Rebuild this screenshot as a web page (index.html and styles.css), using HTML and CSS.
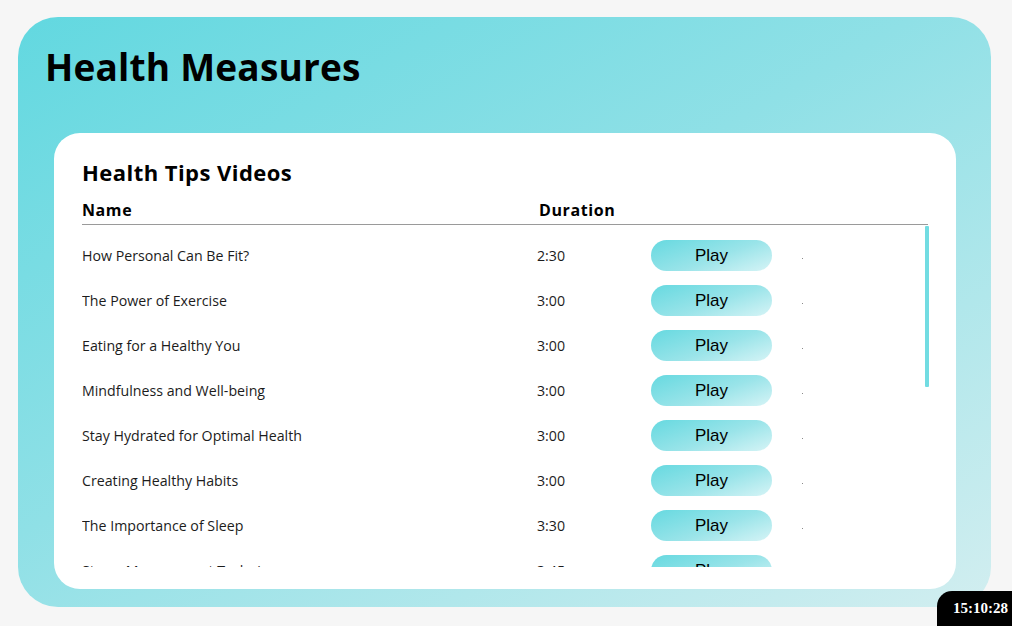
FILE: index.html
```html
<!DOCTYPE html>
<html lang="en">
<head>
<meta charset="utf-8">
<title>Health Measures</title>
<link rel="stylesheet" href="styles.css">
</head>
<body>
<main class="panel">
  <h1 class="title">Health Measures</h1>
  <section class="card">
    <h2 class="card-title">Health Tips Videos</h2>
    <div class="thead">
      <div class="th th-name">Name</div>
      <div class="th th-dur">Duration</div>
      <div class="th"></div>
      <div class="th"></div>
    </div>
    <div class="scroll-wrap">
      <div class="tbody">
        <div class="row"><div class="name">How Personal Can Be Fit?</div><div class="dur">2:30</div><div><button class="play">Play</button></div><div><span class="dot"></span></div></div>
        <div class="row"><div class="name">The Power of Exercise</div><div class="dur">3:00</div><div><button class="play">Play</button></div><div><span class="dot"></span></div></div>
        <div class="row"><div class="name">Eating for a Healthy You</div><div class="dur">3:00</div><div><button class="play">Play</button></div><div><span class="dot"></span></div></div>
        <div class="row"><div class="name">Mindfulness and Well-being</div><div class="dur">3:00</div><div><button class="play">Play</button></div><div><span class="dot"></span></div></div>
        <div class="row"><div class="name">Stay Hydrated for Optimal Health</div><div class="dur">3:00</div><div><button class="play">Play</button></div><div><span class="dot"></span></div></div>
        <div class="row"><div class="name">Creating Healthy Habits</div><div class="dur">3:00</div><div><button class="play">Play</button></div><div><span class="dot"></span></div></div>
        <div class="row"><div class="name">The Importance of Sleep</div><div class="dur">3:30</div><div><button class="play">Play</button></div><div><span class="dot"></span></div></div>
        <div class="row"><div class="name">Stress Management Techniques</div><div class="dur">3:45</div><div><button class="play">Play</button></div><div><span class="dot"></span></div></div>
        <div class="row"><div class="name">Building Strong Bones</div><div class="dur">3:00</div><div><button class="play">Play</button></div><div><span class="dot"></span></div></div>
        <div class="row"><div class="name">Heart Health Basics</div><div class="dur">3:15</div><div><button class="play">Play</button></div><div><span class="dot"></span></div></div>
        <div class="row"><div class="name">Stretching for Flexibility</div><div class="dur">2:45</div><div><button class="play">Play</button></div><div><span class="dot"></span></div></div>
        <div class="row"><div class="name">Healthy Snacking Ideas</div><div class="dur">3:00</div><div><button class="play">Play</button></div><div><span class="dot"></span></div></div>
        <div class="row"><div class="name">Posture and Back Care</div><div class="dur">3:20</div><div><button class="play">Play</button></div><div><span class="dot"></span></div></div>
        <div class="row"><div class="name">Boosting Your Immunity</div><div class="dur">3:10</div><div><button class="play">Play</button></div><div><span class="dot"></span></div></div>
        <div class="row"><div class="name">Walking Your Way to Health</div><div class="dur">2:50</div><div><button class="play">Play</button></div><div><span class="dot"></span></div></div>
        <div class="row"><div class="name">Screen Time and Eye Care</div><div class="dur">3:00</div><div><button class="play">Play</button></div><div><span class="dot"></span></div></div>
      </div>
      <div class="thumb"></div>
    </div>
  </section>
</main>
<div class="clock">15:10:28</div>
</body>
</html>
```
FILE: styles.css
```css
html, body {
  margin: 0;
  padding: 0;
}
body {
  background: #f6f6f6;
  width: 1012px;
  height: 626px;
  overflow: hidden;
  font-family: "Open Sans", "Liberation Sans", sans-serif;
}
.panel {
  box-sizing: border-box;
  margin: 17px 21px 0 18px;
  width: 973px;
  height: 590px;
  border-radius: 40px;
  background: linear-gradient(150deg, #62d8e0 0%, #8fe0e6 45%, #d2eef0 100%);
  padding: 28px 35px 18px 27px;
  display: flex;
  flex-direction: column;
}
.title {
  margin: 0;
  font-family: "Open Sans", sans-serif;
  font-weight: 700;
  font-size: 37px;
  line-height: 44px;
  color: #000;
  letter-spacing: 0.2px;
}
.card {
  margin: 44px 0 0 9px;
  background: #fff;
  border-radius: 26px;
  padding: 24px 26px 22px 28px;
  height: 456px;
  box-sizing: border-box;
  display: flex;
  flex-direction: column;
}
.card-title {
  margin: 0;
  font-family: "Open Sans", sans-serif;
  font-weight: 700;
  font-size: 22px;
  line-height: 30px;
  letter-spacing: 0.45px;
  color: #000;
}
.thead, .row {
  display: grid;
  grid-template-columns: 455px 114px 151px 1fr;
}
.thead {
  align-items: center;
  margin-top: 13px;
  padding-bottom: 4px;
  border-bottom: 1px solid #9a9a9a;
  margin-right: 2px;
}
.th {
  font-weight: 700;
  font-size: 16px;
  line-height: 20px;
  letter-spacing: 0.6px;
  color: #000;
}
.th-dur {
  padding-left: 2px;
}
.scroll-wrap {
  position: relative;
  margin-top: 1px;
  height: 341px;
}
.tbody {
  height: 100%;
  overflow-y: scroll;
  scrollbar-width: none;
  padding-top: 7px;
  box-sizing: border-box;
}
.tbody::-webkit-scrollbar {
  display: none;
}
.thumb {
  position: absolute;
  top: 0;
  right: 1px;
  width: 4px;
  height: 161px;
  background: #72dce2;
  border-radius: 1px;
}
.row {
  height: 45px;
  padding-top: 7px;
  box-sizing: border-box;
  align-items: start;
}
.name, .dur {
  font-size: 14.2px;
  line-height: 31px;
  color: #1c1c1c;
}
.play {
  display: block;
  width: 121px;
  height: 31px;
  border: none;
  border-radius: 16px;
  background: linear-gradient(160deg, #66d9e0 0%, #9ae4e9 55%, #d6f4f6 100%);
  font-family: "Liberation Sans", Arial, sans-serif;
  font-size: 17px;
  color: #000;
  padding: 0;
  cursor: pointer;
}
.dot {
  display: block;
  width: 1px;
  height: 1px;
  margin-top: 18px;
  background: #8a8a8a;
}
.clock {
  position: fixed;
  right: 0;
  bottom: 0;
  width: 75px;
  height: 35px;
  box-sizing: border-box;
  background: #000;
  border-top-left-radius: 15px;
  color: #fff;
  font-family: "Liberation Serif", serif;
  font-weight: 700;
  font-size: 15px;
  line-height: 35px;
  text-align: right;
  padding-right: 4px;
}
```
